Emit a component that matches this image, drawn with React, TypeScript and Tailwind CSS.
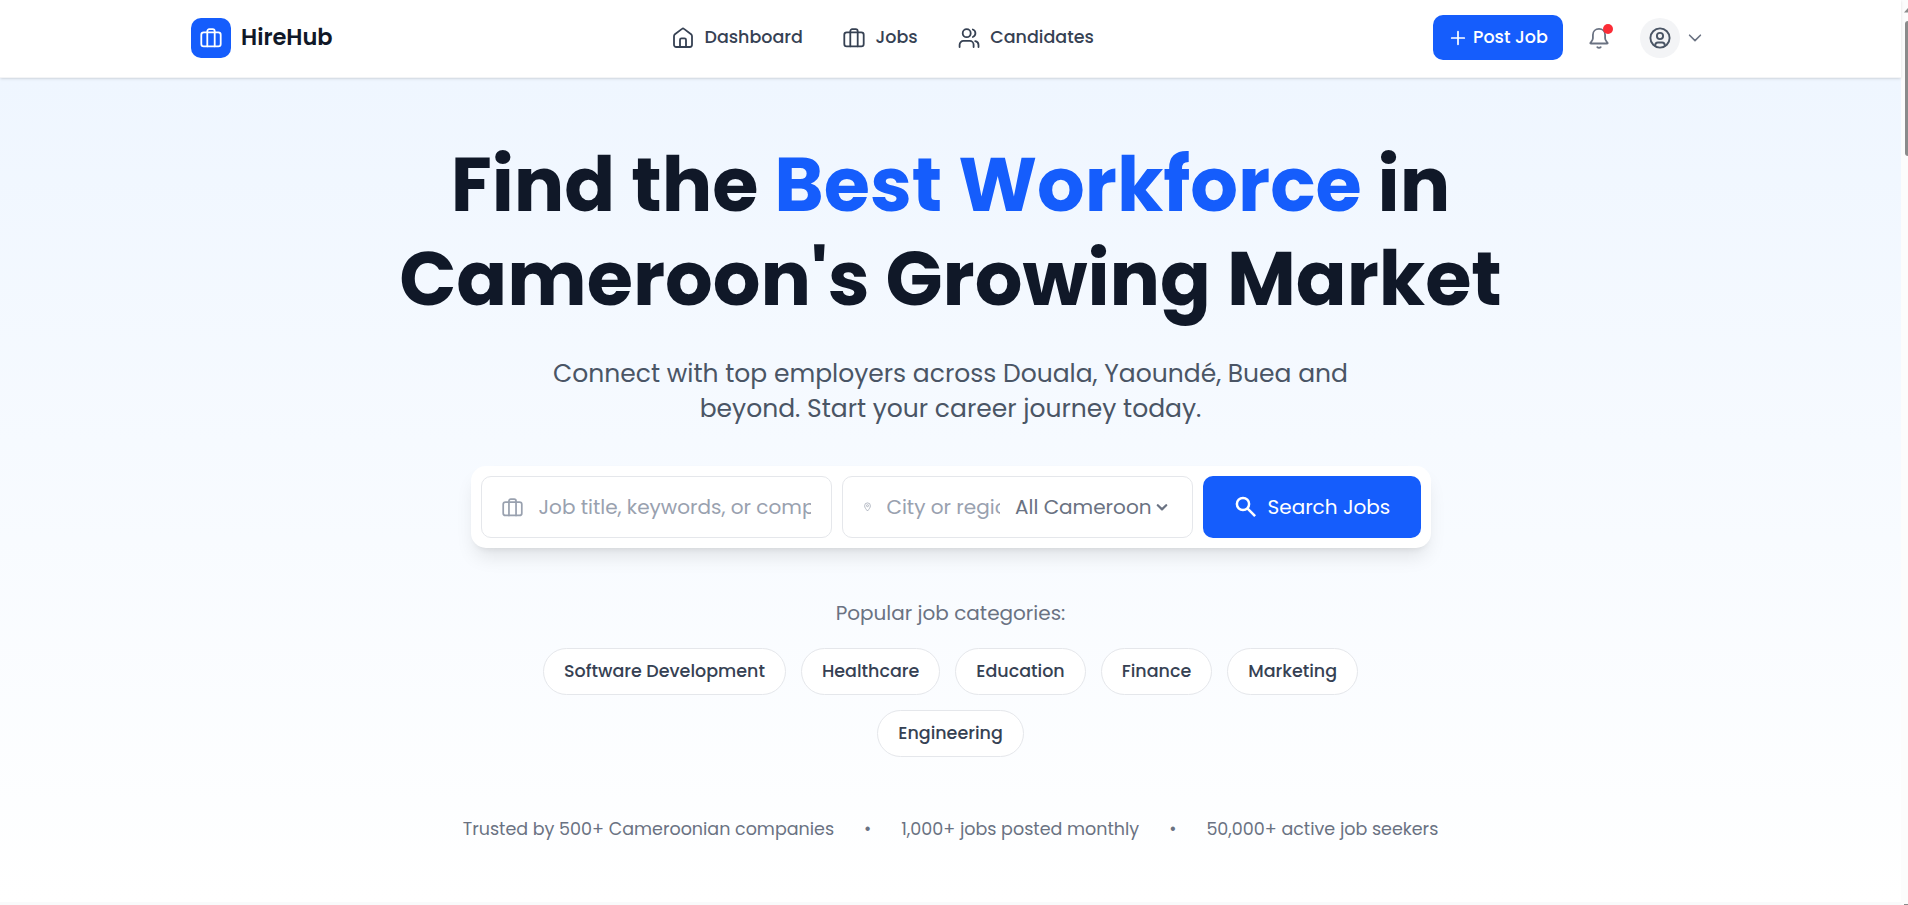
import type { ReactNode } from "react";

type IconProps = { className?: string; strokeWidth?: number };

function Icon({ className = "h-6 w-6", strokeWidth = 1.8, children }: IconProps & { children: ReactNode }) {
  return (
    <svg
      viewBox="0 0 24 24"
      fill="none"
      stroke="currentColor"
      strokeWidth={strokeWidth}
      strokeLinecap="round"
      strokeLinejoin="round"
      className={`shrink-0 ${className}`}
    >
      {children}
    </svg>
  );
}

const SuitcaseIcon = (p: IconProps) => (
  <Icon {...p}>
    <rect x="2.3" y="6.3" width="19.4" height="14" rx="2.4" />
    <path d="M8.3 20.3V5.2a2 2 0 0 1 2-2h3.4a2 2 0 0 1 2 2v15.1" />
  </Icon>
);

const HomeIcon = (p: IconProps) => (
  <Icon {...p}>
    <path d="M3 10.2c0-.8.3-1.4.9-1.9l7.1-5.4a1.6 1.6 0 0 1 2 0l7.1 5.4c.6.5.9 1.1.9 1.9v8.6a2.2 2.2 0 0 1-2.2 2.2H5.2A2.2 2.2 0 0 1 3 18.8z" />
    <path d="M9 21v-7.2c0-.9.6-1.5 1.5-1.5h3c.9 0 1.5.6 1.5 1.5V21" />
  </Icon>
);

const UsersIcon = (p: IconProps) => (
  <Icon {...p}>
    <circle cx="9.7" cy="7.2" r="4" />
    <path d="M2.6 21v-2.3a3.8 3.8 0 0 1 3.8-3.8h6.4a3.8 3.8 0 0 1 3.8 3.8V21" />
    <path d="M15.8 3.5a4 4 0 0 1 0 7.5" />
    <path d="M18.2 15.1a3.9 3.9 0 0 1 3.3 3.8V21" />
  </Icon>
);

const BellIcon = (p: IconProps) => (
  <Icon {...p}>
    <path d="M12 2.9c-3.5 0-6.1 2.5-6.1 6v3.3c0 1.4-.7 2.5-1.7 3.6-.8.8-1.3 1.7-.3 1.7h16.2c1 0 .5-.9-.3-1.7-1-1.1-1.7-2.2-1.7-3.6V8.9c0-3.5-2.6-6-6.1-6z" />
    <path d="M10.3 21.2c.9 1 2.5 1 3.4 0" />
  </Icon>
);

const UserCircleIcon = (p: IconProps) => (
  <Icon {...p}>
    <circle cx="12" cy="12" r="9.6" />
    <circle cx="12" cy="10" r="3.1" />
    <path d="M7.3 20v-.9a2.6 2.6 0 0 1 2.6-2.6h4.2a2.6 2.6 0 0 1 2.6 2.6v.9" />
  </Icon>
);

const navItems = [
  { label: "Dashboard", icon: HomeIcon },
  { label: "Jobs", icon: SuitcaseIcon },
  { label: "Candidates", icon: UsersIcon },
];

const categories = ["Software Development", "Healthcare", "Education", "Finance", "Marketing", "Engineering"];

const stats = ["Trusted by 500+ Cameroonian companies", "1,000+ jobs posted monthly", "50,000+ active job seekers"];

function Header() {
  return (
    <header className="relative z-10 h-[78px] border-b border-gray-100 bg-white pt-[15px] shadow-sm">
      <div className="flex h-[45px] items-center pl-[191px]">
        <div className="flex w-[480px] items-center">
          <div className="flex h-10 w-10 items-center justify-center rounded-[10px] bg-[#155dfc] text-white">
            <SuitcaseIcon />
          </div>
          <span className="ml-2.5 text-[22.5px] font-semibold text-[#101828]">HireHub</span>
        </div>

        <nav className="flex w-[762px] items-center gap-[39px] text-[17.5px] font-medium text-[#364153]">
          {navItems.map(({ label, icon: NavIcon }) => (
            <a key={label} className="flex items-center gap-[9.5px]">
              <NavIcon />
              <span>{label}</span>
            </a>
          ))}
        </nav>

        <button className="flex h-[45px] w-[130px] items-center rounded-[10px] bg-[#155dfc] pl-[17px] text-[17.5px] font-medium text-white">
          <svg viewBox="0 0 16 16" className="h-4 w-4 shrink-0" stroke="currentColor" strokeWidth="1.7" strokeLinecap="round">
            <path d="M8 1.7v12.6M1.7 8h12.6" />
          </svg>
          <span className="ml-[7px] whitespace-nowrap">Post Job</span>
        </button>

        <div className="relative ml-6 text-[#6a7282]">
          <BellIcon />
          <span className="absolute -top-[2px] left-4 h-2.5 w-2.5 rounded-full bg-[#fb2c36]" />
        </div>

        <div className="ml-[29px] flex h-10 w-10 items-center justify-center rounded-full bg-[#f3f4f6] text-[#4a5565]">
          <UserCircleIcon strokeWidth={1.9} />
        </div>
        <svg viewBox="0 0 14 14" fill="none" stroke="currentColor" strokeWidth="1.6" strokeLinecap="round" strokeLinejoin="round" className="ml-2 h-3.5 w-3.5 text-[#6a7282]">
          <path d="M1.6 4.2 7 9.6l5.4-5.4" />
        </svg>
      </div>
    </header>
  );
}

function SearchCard() {
  return (
    <div className="mt-10 flex h-[82px] w-[960px] items-center gap-2.5 rounded-[15px] bg-white px-2.5 text-[20px] shadow-[0_12px_19px_-4px_rgb(0_0_0/0.1),0_5px_7px_-5px_rgb(0_0_0/0.1)]">
      <div className="flex h-[62px] w-[351px] items-center rounded-[10px] border border-gray-200 pl-[19px]">
        <SuitcaseIcon className="h-[23px] w-[23px] text-[#99a1af]" />
        <input
          className="ml-[15px] w-[272px] outline-none placeholder:text-[#99a1af]"
          placeholder="Job title, keywords, or company"
        />
      </div>
      <div className="flex h-[62px] w-[351px] items-center rounded-[10px] border border-gray-200 pl-[21px]">
        <svg viewBox="0 0 7 10" fill="none" stroke="currentColor" strokeWidth="0.7" className="h-2.5 w-[7px] shrink-0 text-[#99a1af]">
          <path d="M3.5 9C2 7.200.6 5.500.6 3.800a2.900 2.900 0 0 1 5.800 0C6.400 5.500 5 7.200 3.500 9z" />
          <circle cx="3.5" cy="3.7" r="1" />
        </svg>
        <input
          className="ml-4 w-[113px] outline-none placeholder:text-[#99a1af]"
          placeholder="City or region"
        />
        <button className="ml-[15.5px] flex items-center whitespace-nowrap text-[#6a7282]">
          <span>All Cameroon</span>
          <svg viewBox="0 0 14 14" fill="none" stroke="currentColor" strokeWidth="2.2" strokeLinecap="round" strokeLinejoin="round" className="ml-1 h-3.5 w-3.5">
            <path d="M2.8 5.2 7 9.4l4.2-4.2" />
          </svg>
        </button>
      </div>
      <button className="flex h-[62px] w-[218px] items-center rounded-[10px] bg-[#155dfc] pl-8 text-white">
        <svg viewBox="0 0 22 22" fill="none" stroke="currentColor" strokeWidth="2.5" className="h-[22px] w-[22px] shrink-0">
          <circle cx="8" cy="8" r="6.1" />
          <path d="m12.4 12.4 7.7 7.7" />
        </svg>
        <span className="ml-[11px] whitespace-nowrap">Search Jobs</span>
      </button>
    </div>
  );
}

function Hero() {
  return (
    <main className="flex h-[824px] flex-col items-center bg-linear-to-b from-[#eff6ff] to-white pt-[60px]">
      <h1 className="text-center text-[75px] leading-[94px] font-bold whitespace-nowrap text-[#101828]">
        Find the <span className="text-[#155dfc]">Best Workforce</span> in
        <br />
        Cameroon's Growing Market
      </h1>

      <p className="mt-[30px] text-center text-[25px] leading-[35px] whitespace-nowrap text-[#4a5565]">
        Connect with top employers across Douala, Yaoundé, Buea and
        <br />
        beyond. Start your career journey today.
      </p>

      <SearchCard />

      <p className="mt-[50px] text-[20px] leading-[30px] text-[#6a7282]">Popular job categories:</p>

      <div className="mt-5 flex max-w-[840px] flex-wrap justify-center gap-[15px]">
        {categories.map((label) => (
          <button
            key={label}
            className="h-[47px] rounded-full border border-gray-200 bg-white px-5 text-[17.5px] font-medium whitespace-nowrap text-[#364153]"
          >
            {label}
          </button>
        ))}
      </div>

      <div className="mt-[60px] flex gap-[30px] text-[17.5px] leading-[25px] whitespace-nowrap text-[#6a7282]">
        <span>{stats[0]}</span>
        <span>•</span>
        <span>{stats[1]}</span>
        <span>•</span>
        <span>{stats[2]}</span>
      </div>
    </main>
  );
}

function ScrollTrack() {
  return (
    <aside className="flex w-[7px] flex-col items-end overflow-hidden bg-[#fcfcfc]">
      <svg viewBox="0 0 4 5" className="mt-2 h-[5px] w-1 shrink-0" fill="#8b8b8b">
        <path d="M0 4.5 4 0v4.5z" />
      </svg>
      <div className="mt-2 h-[135px] w-[3px] shrink-0 rounded-l-[3px] bg-[#8b8b8b]" />
      <div className="mt-auto h-px w-1 shrink-0 bg-[#8b8b8b]" />
    </aside>
  );
}

export default function App() {
  return (
    <div className="flex h-[905px] w-full overflow-hidden bg-gray-50 font-['Poppins','Inter',sans-serif]">
      <div className="w-[1901px]">
        <Header />
        <Hero />
      </div>
      <ScrollTrack />
    </div>
  );
}
